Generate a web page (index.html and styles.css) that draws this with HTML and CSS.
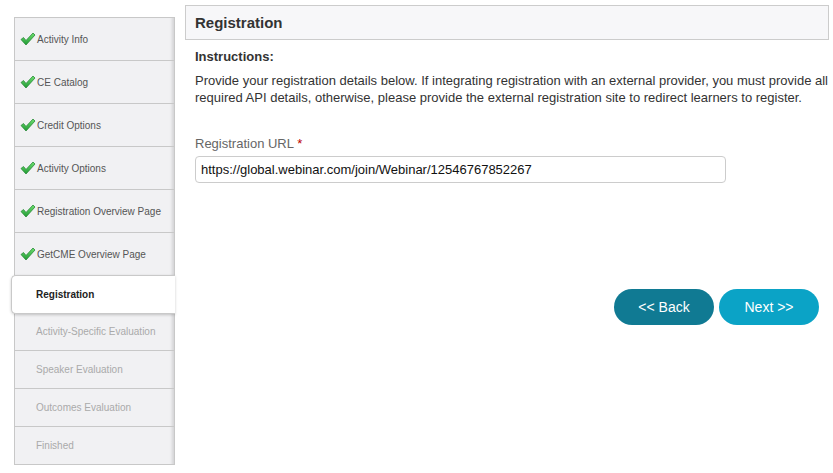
FILE: index.html
```html
<!DOCTYPE html>
<html>
<head>
<meta charset="utf-8">
<link rel="stylesheet" href="styles.css">
</head>
<body>
<div class="page">
  <nav class="steps">
    <div class="step done"><svg class="chk" viewBox="0 0 16 14"><defs><linearGradient id="g" x1="0" y1="0" x2="0" y2="1"><stop offset="0" stop-color="#6fe06f"/><stop offset="1" stop-color="#1f9a33"/></linearGradient></defs><path d="M1 7.5 L3.5 5.5 L6 8.5 L13 1 L15 3 L6 13 Z" fill="url(#g)" stroke="#2b8a3a" stroke-width="0.8" stroke-linejoin="round"/></svg>Activity Info</div>
    <div class="step done"><svg class="chk" viewBox="0 0 16 14"><path d="M1 7.5 L3.5 5.5 L6 8.5 L13 1 L15 3 L6 13 Z" fill="url(#g)" stroke="#2b8a3a" stroke-width="0.8" stroke-linejoin="round"/></svg>CE Catalog</div>
    <div class="step done"><svg class="chk" viewBox="0 0 16 14"><path d="M1 7.5 L3.5 5.5 L6 8.5 L13 1 L15 3 L6 13 Z" fill="url(#g)" stroke="#2b8a3a" stroke-width="0.8" stroke-linejoin="round"/></svg>Credit Options</div>
    <div class="step done"><svg class="chk" viewBox="0 0 16 14"><path d="M1 7.5 L3.5 5.5 L6 8.5 L13 1 L15 3 L6 13 Z" fill="url(#g)" stroke="#2b8a3a" stroke-width="0.8" stroke-linejoin="round"/></svg>Activity Options</div>
    <div class="step done"><svg class="chk" viewBox="0 0 16 14"><path d="M1 7.5 L3.5 5.5 L6 8.5 L13 1 L15 3 L6 13 Z" fill="url(#g)" stroke="#2b8a3a" stroke-width="0.8" stroke-linejoin="round"/></svg>Registration Overview Page</div>
    <div class="step done"><svg class="chk" viewBox="0 0 16 14"><path d="M1 7.5 L3.5 5.5 L6 8.5 L13 1 L15 3 L6 13 Z" fill="url(#g)" stroke="#2b8a3a" stroke-width="0.8" stroke-linejoin="round"/></svg>GetCME Overview Page</div>
    <div class="step active">Registration</div>
    <div class="step off">Activity-Specific Evaluation</div>
    <div class="step off">Speaker Evaluation</div>
    <div class="step off">Outcomes Evaluation</div>
    <div class="step off last">Finished</div>
  </nav>
  <main class="main">
    <div class="header">Registration</div>
    <div class="content">
      <div class="instr-title">Instructions:</div>
      <p class="instr">Provide your registration details below. If integrating registration with an external provider, you must provide all<br>required API details, otherwise, please provide the external registration site to redirect learners to register.</p>
      <label class="label">Registration URL <span class="req">*</span></label>
      <div class="input">https://global.webinar.com/join/Webinar/12546767852267</div>
      <div class="actions">
        <button class="btn back">&lt;&lt; Back</button>
        <button class="btn next">Next &gt;&gt;</button>
      </div>
    </div>
  </main>
</div>
</body>
</html>
```
FILE: styles.css
```css
* { box-sizing: border-box; }
body {
  margin: 0;
  background: #fff;
  font-family: "Liberation Sans", Arial, sans-serif;
  color: #333;
}
.page {
  display: flex;
  align-items: flex-start;
}
.steps {
  margin: 17px 0 0 14px;
  width: 161px;
  border: 1px solid #c8c8c8;
  border-bottom: none;
  background: #f1f1f3;
  box-shadow: inset -4px 0 3px -2px rgba(0,0,0,0.12);
  display: flex;
  flex-direction: column;
}
.step {
  display: flex;
  align-items: center;
  height: 43px;
  border-bottom: 1px solid #c8c8c8;
  font-size: 10px;
  color: #555;
  padding-left: 21px;
}
.step.done { padding-left: 5px; }
.chk {
  width: 16px;
  height: 14px;
  margin-right: 1px;
  flex: none;
}
.step.active {
  height: 39px;
  margin: -1px -1px -1px -4px;
  background: #fff;
  border: 1px solid #c9c9c9;
  border-right: none;
  border-radius: 5px 0 0 5px;
  box-shadow: 0 1px 3px rgba(0,0,0,0.2);
  font-weight: bold;
  color: #222;
  padding-left: 24px;
  position: relative;
}
.step.off {
  height: 38px;
  color: #aaa;
}
.main {
  margin: 5px 0 0 10px;
  width: 644px;
}
.header {
  height: 35px;
  border: 1px solid #cccccc;
  background: #f7f7f9;
  font-size: 15px;
  font-weight: bold;
  line-height: 33px;
  padding-left: 9px;
  color: #333;
}
.content {
  padding: 0 10px;
  display: flex;
  flex-direction: column;
}
.instr-title {
  margin-top: 9px;
  font-size: 13px;
  font-weight: bold;
  line-height: 16px;
  color: #333;
}
.instr {
  margin: 7px 0 0 0;
  font-size: 13px;
  line-height: 17px;
  color: #333;
  white-space: nowrap;
}
.label {
  margin-top: 29px;
  font-size: 13px;
  line-height: 17px;
  color: #666;
}
.req { color: #b00; }
.input {
  margin-top: 4px;
  width: 531px;
  height: 27px;
  border: 1px solid #ccc;
  border-radius: 4px;
  font-size: 13px;
  line-height: 25px;
  padding-left: 5px;
  color: #111;
}
.actions {
  margin-top: 106px;
  display: flex;
  justify-content: flex-end;
  gap: 5px;
}
.btn {
  width: 100px;
  height: 36px;
  border: none;
  border-radius: 18px;
  color: #fff;
  font-family: "Liberation Sans", Arial, sans-serif;
  font-size: 14px;
  padding: 0;
}
.back { background: #107a93; }
.next { background: #0ba3c6; }
```
